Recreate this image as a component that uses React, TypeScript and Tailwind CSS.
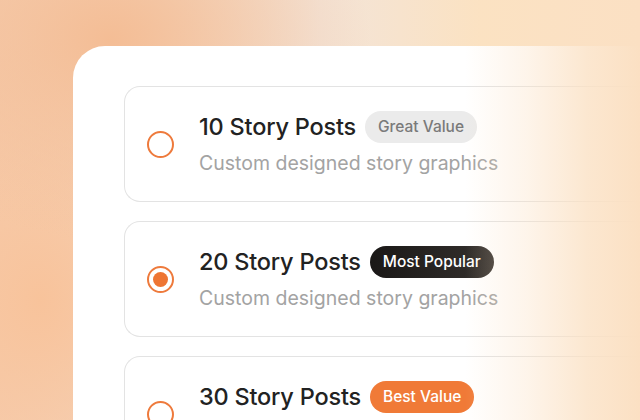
import React from "react";

type Item = {
  title: string;
  badge: string;
  badgeClass: string;
  selected: boolean;
};

const items: Item[] = [
  { title: "10 Story Posts", badge: "Great Value", badgeClass: "bg-[#ebebeb] text-[#7a7a7a]", selected: false },
  {
    title: "20 Story Posts",
    badge: "Most Popular",
    badgeClass: "bg-gradient-to-r from-[#1a1817] to-[#35312e] text-white",
    selected: true,
  },
  { title: "30 Story Posts", badge: "Best Value", badgeClass: "bg-[#f07a37] text-white", selected: false },
];

function Radio({ selected }: { selected: boolean }) {
  return (
    <div className="w-[27px] h-[27px] shrink-0 rounded-full border-[2px] border-[#ee7a3c] flex items-center justify-center">
      {selected && <div className="w-[15px] h-[15px] rounded-full bg-[#ee7533]" />}
    </div>
  );
}

export default function App() {
  return (
    <div
      className="relative w-[640px] h-[420px] overflow-hidden bg-[radial-gradient(ellipse_260px_200px_at_110px_40px,#f4bd95_0%,rgba(244,189,149,0)_100%),radial-gradient(ellipse_200px_260px_at_40px_300px,#f8c39b_0%,rgba(248,195,155,0)_100%),linear-gradient(90deg,#f5cfb3_0%,#f3e4d8_50%,#fbe2c2_75%,#fbe0c2_100%)]"
      style={{ fontFamily: "Inter, 'Noto Sans', sans-serif" }}
    >
      <div className="ml-[73px] mt-[46px] h-[400px] rounded-tl-[32px] bg-white pl-[51px] pt-[40px]">
        <div className="flex flex-col gap-[19px]">
          {items.map((it) => (
            <div
              key={it.title}
              className="h-[116px] w-[600px] rounded-l-[16px] border-[1.5px] border-r-0 border-[#e3e3e3] flex items-center pl-[22px] gap-[25px]"
            >
              <Radio selected={it.selected} />
              <div className="flex flex-col">
                <div className="flex items-center gap-[9px]">
                  <span className="text-[23.5px] leading-[32px] font-medium text-[#222222] tracking-[-0.2px]">
                    {it.title}
                  </span>
                  <span
                    className={`h-[32px] px-[13px] rounded-full flex items-center text-[15.5px] font-medium ${it.badgeClass}`}
                  >
                    {it.badge}
                  </span>
                </div>
                <span className="mt-[7px] text-[19.5px] leading-[27px] text-[#a3a3a3]">
                  Custom designed story graphics
                </span>
              </div>
            </div>
          ))}
        </div>
      </div>
      <div className="pointer-events-none absolute top-0 right-0 h-full w-[175px] bg-[linear-gradient(90deg,rgba(251,225,196,0)_0%,rgba(251,225,196,0.35)_35%,rgba(251,225,196,0.8)_70%,#fbe0c3_100%)]" />
    </div>
  );
}
